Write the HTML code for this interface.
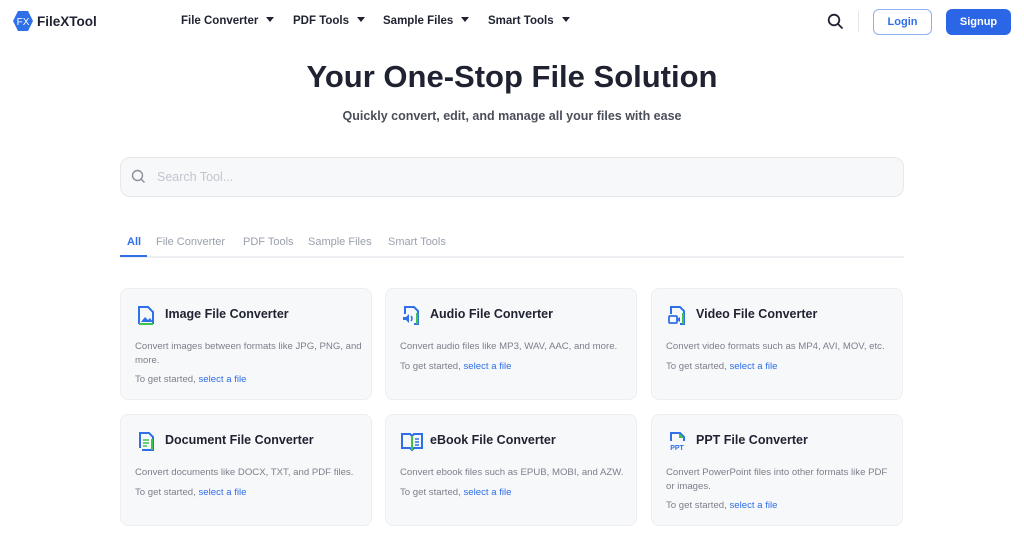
<!DOCTYPE html>
<html><head><meta charset="utf-8"><style>
*{box-sizing:border-box;margin:0;padding:0}
body{width:1024px;height:534px;overflow:hidden;background:#fff;font-family:"Liberation Sans",sans-serif;color:#1f2230;position:relative}
.abs{position:absolute}
.nav{font-size:11.5px;font-weight:bold;color:#1f2230;top:15px}
.nav:after{content:"";display:inline-block;margin-left:8px;border-left:4px solid transparent;border-right:4px solid transparent;border-top:5px solid #1f2230;vertical-align:2px}
.card{position:absolute;width:252px;height:112px;background:#f7f8fa;border:1px solid #eceef2;border-radius:8px}
.card h3{position:absolute;left:44px;top:18px;font-size:12.5px;font-weight:bold;color:#1f2230}
.card svg{position:absolute;left:14px;top:15px}
.card p{position:absolute;left:14px;top:51px;width:232px;font-size:9.6px;line-height:13.5px;color:#7b7f8a}
.card .g{position:absolute;left:14px;font-size:9.6px;color:#7b7f8a}
.card .g span{color:#2f6fe8}
.tab{position:absolute;top:236px;font-size:11px;color:#9aa0ab}
</style></head><body>
<svg class="abs" style="left:12px;top:10px" width="22" height="22" viewBox="0 0 22 22"><polygon points="6,1 16,1 21,11 16,21 6,21 1,11" fill="#2f6fe8"/><text x="11" y="15" font-size="10" fill="#fff" text-anchor="middle" font-family="Liberation Sans">FX</text></svg>
<div class="abs" style="left:37px;top:14px;font-size:13.5px;font-weight:bold">FileXTool</div>
<div class="abs nav" style="left:181px">File Converter</div>
<div class="abs nav" style="left:293px">PDF Tools</div>
<div class="abs nav" style="left:383px">Sample Files</div>
<div class="abs nav" style="left:488px">Smart Tools</div>
<svg class="abs" style="left:827px;top:13px" width="17" height="17" viewBox="0 0 17 17"><circle cx="7" cy="7" r="5.3" fill="none" stroke="#1f2230" stroke-width="1.8"/><line x1="11" y1="11" x2="15" y2="15" stroke="#1f2230" stroke-width="1.8" stroke-linecap="round"/></svg>
<div class="abs" style="left:858px;top:11px;width:1px;height:21px;background:#e3e5e9"></div>
<div class="abs" style="left:873px;top:9px;width:59px;height:26px;border:1px solid #8fb0f0;border-radius:6px;color:#2f6fe8;font-size:11px;font-weight:bold;text-align:center;line-height:24px">Login</div>
<div class="abs" style="left:946px;top:9px;width:65px;height:26px;background:#2a66e6;border-radius:6px;color:#fff;font-size:11px;font-weight:bold;text-align:center;line-height:26px">Signup</div>
<div class="abs" style="left:0;width:1024px;top:59px;text-align:center;font-size:31px;font-weight:bold;color:#1f2230">Your One-Stop File Solution</div>
<div class="abs" style="left:0;width:1024px;top:109px;text-align:center;font-size:12.5px;font-weight:bold;color:#4a4e5a">Quickly convert, edit, and manage all your files with ease</div>
<div class="abs" style="left:120px;top:157px;width:784px;height:40px;background:#f7f8fa;border:1px solid #e6e8ec;border-radius:10px"></div>
<svg class="abs" style="left:131px;top:169px" width="15" height="15" viewBox="0 0 15 15"><circle cx="6.5" cy="6.5" r="5" fill="none" stroke="#8a8f99" stroke-width="1.4"/><line x1="10.2" y1="10.2" x2="13.5" y2="13.5" stroke="#8a8f99" stroke-width="1.4"/></svg>
<div class="abs" style="left:157px;top:170px;font-size:12.5px;color:#c2c6cd">Search Tool...</div>
<div class="tab" style="left:127px;color:#2f6fe8;font-weight:bold">All</div>
<div class="tab" style="left:156px">File Converter</div>
<div class="tab" style="left:243px">PDF Tools</div>
<div class="tab" style="left:308px">Sample Files</div>
<div class="tab" style="left:388px">Smart Tools</div>
<div class="abs" style="left:120px;top:256px;width:784px;height:2px;background:#eceef1"></div>
<div class="abs" style="left:120px;top:255px;width:27px;height:2px;background:#2f6fe8"></div>

<div class="card" style="left:120px;top:288px"><svg width="22" height="22" viewBox="0 0 22 22"><path d="M4 20V3h9l5 5v12" fill="none" stroke="#2f6fe8" stroke-width="2"/><path d="M4 20h14" stroke="#3ec24f" stroke-width="2"/><path d="M6 18l4-5 3 3 2-2 3 4z" fill="#2f6fe8"/></svg><h3>Image File Converter</h3><p>Convert images between formats like JPG, PNG, and more.</p><div class="g" style="top:85px">To get started, <span>select a file</span></div></div>
<div class="card" style="left:385px;top:288px"><svg width="22" height="22" viewBox="0 0 22 22"><path d="M5 10V3h9l4 4v13h-4" fill="none" stroke="#2f6fe8" stroke-width="2"/><path d="M17 9v11" stroke="#3ec24f" stroke-width="2"/><path d="M3 13h3l3-3v9l-3-3H3z" fill="#2f6fe8"/><path d="M11 12q2 2.5 0 5" fill="none" stroke="#2f6fe8" stroke-width="1.5"/></svg><h3>Audio File Converter</h3><p>Convert audio files like MP3, WAV, AAC, and more.</p><div class="g" style="top:72px">To get started, <span>select a file</span></div></div>
<div class="card" style="left:651px;top:288px"><svg width="22" height="22" viewBox="0 0 22 22"><path d="M5 10V3h9l4 4v13h-4" fill="none" stroke="#2f6fe8" stroke-width="2"/><path d="M17 9v11" stroke="#3ec24f" stroke-width="2"/><rect x="3" y="12" width="8" height="7" rx="1" fill="none" stroke="#2f6fe8" stroke-width="1.8"/><path d="M11 15l3-2v5l-3-2z" fill="#2f6fe8"/></svg><h3>Video File Converter</h3><p>Convert video formats such as MP4, AVI, MOV, etc.</p><div class="g" style="top:72px">To get started, <span>select a file</span></div></div>

<div class="card" style="left:120px;top:414px"><svg width="22" height="22" viewBox="0 0 22 22"><path d="M5 18V3h9l4 4v13H7" fill="none" stroke="#2f6fe8" stroke-width="2"/><path d="M17 9v11" stroke="#3ec24f" stroke-width="2"/><path d="M8 10h6M8 13h6M8 16h4" stroke="#3ec24f" stroke-width="1.6"/></svg><h3>Document File Converter</h3><p>Convert documents like DOCX, TXT, and PDF files.</p><div class="g" style="top:72px">To get started, <span>select a file</span></div></div>
<div class="card" style="left:385px;top:414px"><svg width="24" height="22" viewBox="0 0 24 22"><path d="M2 4h8l2 2 2-2h8v14h-8l-2 2-2-2H2z" fill="none" stroke="#2f6fe8" stroke-width="2"/><path d="M12 6v14" stroke="#3ec24f" stroke-width="2"/><path d="M15 9h4M15 12h4M15 15h4" stroke="#2f6fe8" stroke-width="1.5"/></svg><h3>eBook File Converter</h3><p>Convert ebook files such as EPUB, MOBI, and AZW.</p><div class="g" style="top:72px">To get started, <span>select a file</span></div></div>
<div class="card" style="left:651px;top:414px"><svg width="22" height="22" viewBox="0 0 22 22"><path d="M5 11V3h9l4 4v4" fill="none" stroke="#2f6fe8" stroke-width="2"/><path d="M13 3v5h5" fill="#3ec24f"/><text x="11" y="20" font-size="7" font-weight="bold" fill="#2f6fe8" text-anchor="middle" font-family="Liberation Sans">PPT</text></svg><h3>PPT File Converter</h3><p>Convert PowerPoint files into other formats like PDF or images.</p><div class="g" style="top:85px">To get started, <span>select a file</span></div></div>
</body></html>
